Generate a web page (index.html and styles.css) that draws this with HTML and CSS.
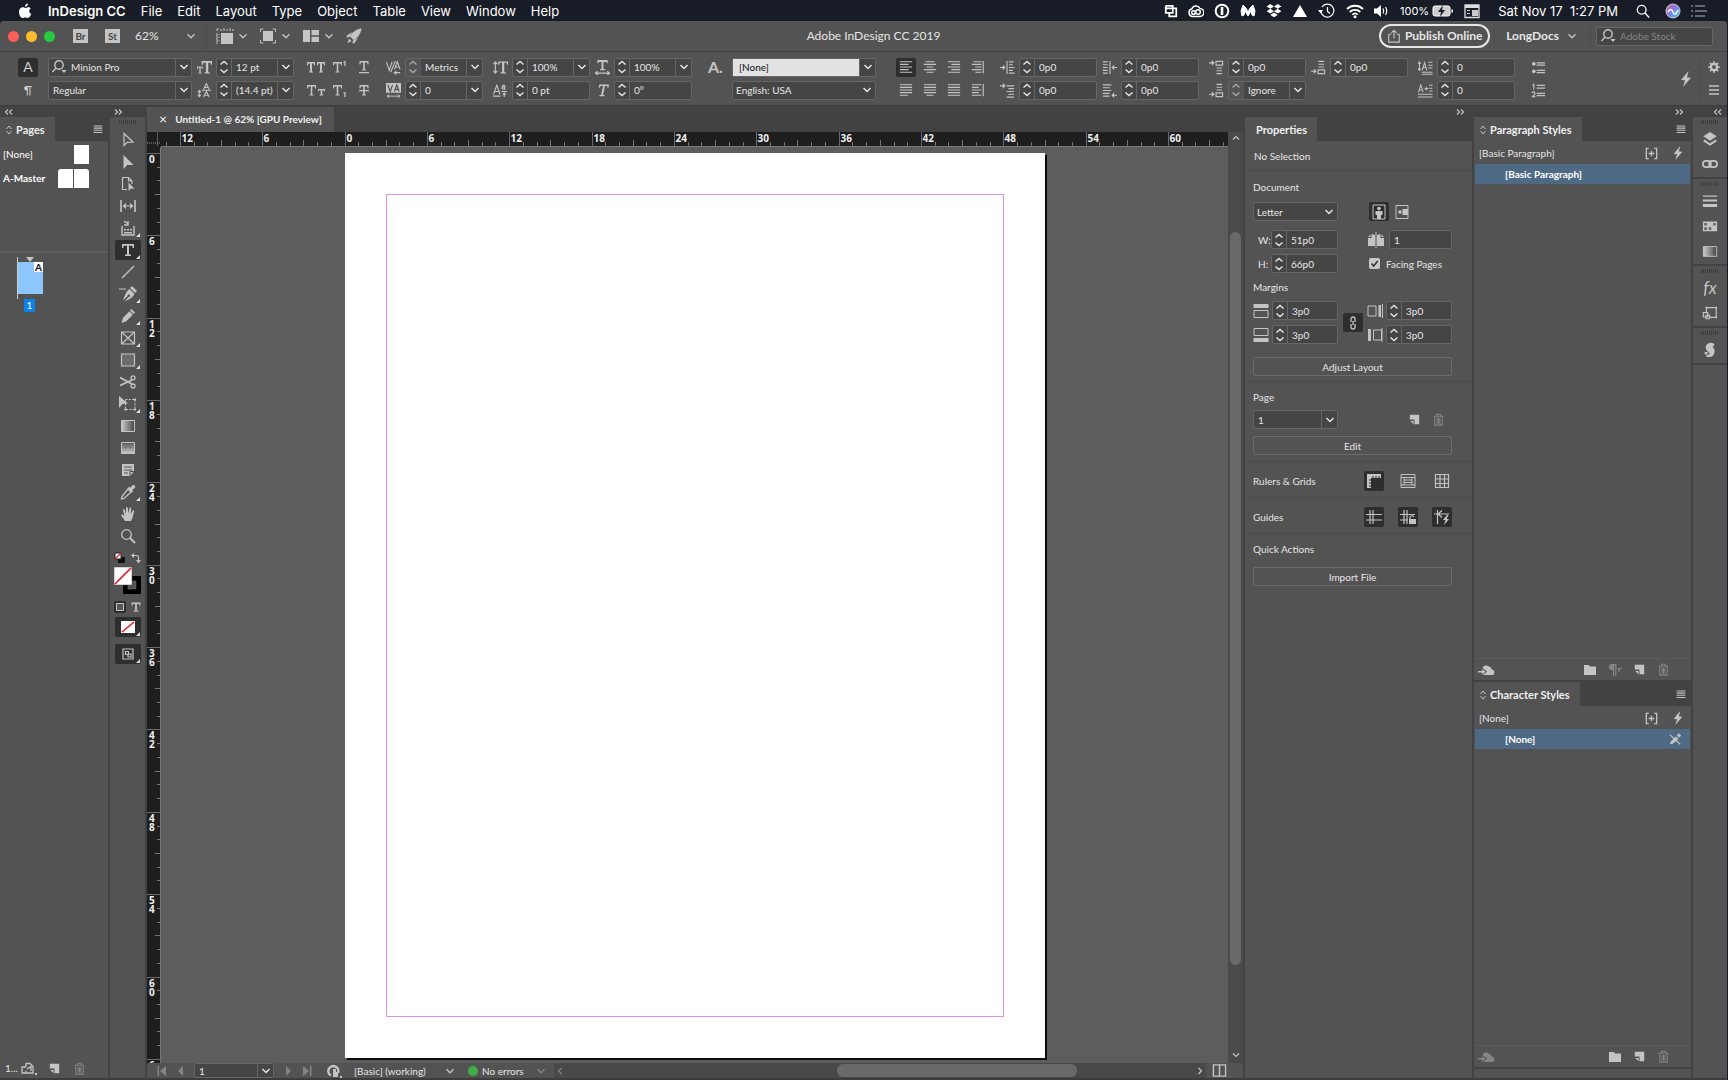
FILE: index.html
```html
<!DOCTYPE html>
<html lang="en">
<head>
<meta charset="utf-8">
<title>Adobe InDesign CC 2019</title>
<link rel="stylesheet" href="styles.css">
</head>
<body>
<svg class="defs" aria-hidden="true">
  <defs>
    <linearGradient id="fade"><stop offset="0" stop-color="#ccc"/><stop offset="1" stop-color="#444"/></linearGradient>
    <linearGradient id="fadeV" x2="0" y2="1"><stop offset="0" stop-color="#555"/><stop offset="1" stop-color="#ccc"/></linearGradient>
    <linearGradient id="siri" x2="1" y2="1"><stop offset="0" stop-color="#e8508c"/><stop offset=".5" stop-color="#7a7ff0"/><stop offset="1" stop-color="#3fd0e8"/></linearGradient>
  </defs>
  <symbol id="chev" viewBox="0 0 16 16"><path d="M4 6l4 4 4-4" fill="none" stroke="currentColor" stroke-width="1.6"/></symbol>
  <symbol id="loupe" viewBox="0 0 16 16"><g fill="none" stroke="currentColor" stroke-width="1.4"><circle cx="8" cy="6" r="4.2"/><path d="M5 9L1.500 13"/></g><path d="M10.500 11h5l-2.500 3z" fill="currentColor"/></symbol>
  <symbol id="burger" viewBox="0 0 16 16"><path d="M3 4.500h10M3 7h10M3 9.500h10M3 12h10" stroke="currentColor" stroke-width="1.200"/></symbol>
  <symbol id="burger3" viewBox="0 0 16 16"><path d="M3 4h10M3 8h10M3 12h10" stroke="currentColor" stroke-width="1.400"/></symbol>
  <symbol id="bolt" viewBox="0 0 16 16"><path d="M10.500 0L3 9l4 .3L5 16l8-9.300-4-.3z" fill="currentColor"/></symbol>
  <symbol id="newpage" viewBox="0 0 16 16"><path d="M3 3h10v10H8V8H3z M3.500 9.500H7V13z" fill="currentColor"/></symbol>
  <symbol id="trash" viewBox="0 0 16 16"><path d="M3 4.500h10M6 4V2.500h4V4M4 5v9h8V5M6.500 6.500v6M8 6.500v6M9.500 6.500v6" fill="none" stroke="currentColor" stroke-width="1.100"/></symbol>
  <symbol id="folder" viewBox="0 0 16 16"><path d="M2 3h5l1 1.500h6V13H2z" fill="currentColor"/></symbol>
  <symbol id="cloud" viewBox="0 0 16 16"><path d="M5 13h8.500a2.700 2.700 0 0 0 .2-5.400A3.500 3.500 0 0 0 11 4.500 4 4 0 0 0 4.500 6L9 9.500 5 13zM0 9h4V7l3.500 2.700L4 12.500v-2H0z" fill="currentColor"/></symbol>
  <symbol id="plusbox" viewBox="0 0 16 16"><path d="M5 2.500H2.500v11H5M11 2.500h2.500v11H11M5 8h6M8 5v6" fill="none" stroke="currentColor" stroke-width="1.400"/></symbol>
  <symbol id="diamond" viewBox="0 0 8 12"><path d="M1.500 5L4 2l2.500 3M1.500 7L4 10l2.500-3" fill="none" stroke="currentColor"/></symbol>
  <symbol id="ja" viewBox="0 0 16 16"><path d="M1 2h14M1 5h10M1 8h14M1 11h10M1 14h14" stroke="currentColor" stroke-width="1.300"/></symbol>
  <symbol id="jc" viewBox="0 0 16 16"><path d="M3 2h10M1 5h14M4 8h8M1 11h14M4 14h8" stroke="currentColor" stroke-width="1.300"/></symbol>
  <symbol id="jr" viewBox="0 0 16 16"><path d="M1 2h14M5 5h10M1 8h14M5 11h10M1 14h14" stroke="currentColor" stroke-width="1.300"/></symbol>
  <symbol id="js" viewBox="0 0 16 16"><path d="M3 2h9M1 5h11M5 8h7M1 11h11M5 14h7M14 1v14" stroke="currentColor" stroke-width="1.300"/></symbol>
  <symbol id="jl1" viewBox="0 0 16 16"><path d="M1 2h14M1 5h14M1 8h14M1 11h14M1 14h9" stroke="currentColor" stroke-width="1.300"/></symbol>
  <symbol id="jl2" viewBox="0 0 16 16"><path d="M1 2h14M1 5h14M1 8h14M1 11h14M4 14h8" stroke="currentColor" stroke-width="1.300"/></symbol>
  <symbol id="jl3" viewBox="0 0 16 16"><path d="M1 2h14M1 5h14M1 8h14M1 11h14M1 14h14" stroke="currentColor" stroke-width="1.300"/></symbol>
  <symbol id="jl4" viewBox="0 0 16 16"><path d="M1 2h11M1 5h8M1 8h11M1 11h8M1 14h11M14 1v14" stroke="currentColor" stroke-width="1.300"/></symbol>
  <symbol id="indL" viewBox="0 0 16 16"><path d="M0 8h4M7.500 1v14M9.500 2h5M9.500 5h4M9.500 8h6M9.500 11h4M9.500 14h6" stroke="currentColor" stroke-width="1.200"/><path d="M3 5l3 3-3 3z" fill="currentColor"/></symbol>
  <symbol id="indR" viewBox="0 0 16 16"><path d="M16 8h-4M8.500 1v14M1 2h5M1 5h5M1 8h5M1 11h5M1 14h5" stroke="currentColor" stroke-width="1.200"/><path d="M13 5l-3 3 3 3z" fill="currentColor"/></symbol>
  <symbol id="indF" viewBox="0 0 16 16"><path d="M0 3h4M7 3h8M9 6h6M7 9h8M9 12h6M7 15h8" stroke="currentColor" stroke-width="1.200"/><path d="M3 0l3 3-3 3z" fill="currentColor"/></symbol>
  <symbol id="indE" viewBox="0 0 16 16"><path d="M16 13h-4M1 2h9M1 5h7M1 8h9M1 11h7M1 14h7" stroke="currentColor" stroke-width="1.200"/><path d="M13 10l-3 3 3 3z" fill="currentColor"/></symbol>
  <symbol id="spB" viewBox="0 0 16 16"><path d="M0 3h4M7.500 1.500h7v4h-7zM8 8.500h6M8 11.500h6M8 14.500h6" stroke="currentColor" stroke-width="1.200" fill="none"/><path d="M3 0l3 3-3 3z" fill="currentColor"/></symbol>
  <symbol id="spA" viewBox="0 0 16 16"><path d="M0 12h4M7.500 10.500h7v4h-7zM8 1.500h6M8 4.500h6M8 7.500h6" stroke="currentColor" stroke-width="1.200" fill="none"/><path d="M3 9l3 3-3 3z" fill="currentColor"/></symbol>
  <symbol id="drop1" viewBox="0 0 16 16"><path d="M1.500 2v9M0 4l1.500-2L3 4M0 9l1.500 2L3 9M4.500 11L7 3l2.500 8M5.500 8h3M11 2.500h4.500M11 5.500h4.500M11 8.500h4.500M4 13h11.500M4 15.300h11.500" stroke="currentColor" stroke-width="1.100" fill="none"/></symbol>
  <symbol id="drop2" viewBox="0 0 16 16"><path d="M.5 10L3 2l2.500 8M1.500 7.500h3M7 6h4M9 4v4M12 2.500h3.500M12 5.500h3.500M12 8.500h3.500M0 12h15.500M0 15h15.500" stroke="currentColor" stroke-width="1.100" fill="none"/></symbol>
  <symbol id="bul" viewBox="0 0 16 16"><circle cx="3" cy="4" r="2" fill="currentColor"/><circle cx="3" cy="12" r="2" fill="currentColor"/><path d="M6 3h9M6 5.500h9M6 11h9M6 13.500h9" stroke="currentColor" stroke-width="1.200"/></symbol>
  <symbol id="num" viewBox="0 0 16 16"><path d="M1.500 2.500L3 1.500V7M1 10.500q2-2 3 0T1 14.500h3.500M6 2.500h9M6 5.500h9M6 11h9M6 13.500h9" stroke="currentColor" stroke-width="1.200" fill="none"/></symbol>
  <symbol id="tsize" viewBox="0 0 16 16"><path d="M5 1h11v4h-1.200l-.3-2h-2.500v10H13.500v1.500H8V13h1.500V3H6.800l-.3 2H5z M0 7h6.500v2.500h-.8L5.500 8H4v5.500h1v1H1.500v-1h1V8H1L.8 9.500H0z" fill="currentColor"/></symbol>
  <symbol id="lead" viewBox="0 0 16 16"><path d="M2.500 8v6M.8 10L2.500 8l1.700 2M.8 12.500l1.700 2 1.700-2M7 7l3-6.500L13 7M8 4.800h4M7 15l3-6 3 6M8 13h4M5 7.700h10" stroke="currentColor" stroke-width="1.100" fill="none"/></symbol>
  <symbol id="kern" viewBox="0 0 16 16"><path d="M.5 2L3.500 11l3-9M5 13L10 1M9 10l3-8 3 8M10 7.500h4M15 13.500H9" stroke="currentColor" stroke-width="1.200" fill="none"/><path d="M11 11l-3 2.500 3 2.500z" fill="currentColor"/></symbol>
  <symbol id="track" viewBox="0 0 16 16"><path d="M0 0h16v10.500H0z" fill="currentColor"/><path d="M2 2l2.500 7L7 2M9 9l2.500-7L14 9M10 6.700h3" stroke="#535353" stroke-width="1.300" fill="none"/><path d="M2 14h12M3.500 12L1 14l2.500 2M12.500 12l2.500 2-2.500 2" stroke="currentColor" fill="none"/></symbol>
  <symbol id="vs" viewBox="0 0 16 16"><path d="M2.500 2v12M.5 4.500l2-2.500 2 2.500M.5 11.500l2 2.500 2-2.500" stroke="currentColor" stroke-width="1.200" fill="none"/><path d="M5.500 1.500H16V5h-1l-.5-2h-2.500v10h1.700v1.500H8V13h1.700V3H7l-.5 2h-1z" fill="currentColor"/></symbol>
  <symbol id="hs" viewBox="0 0 16 16"><path d="M2.500 0h11v3.500h-1L12 2H9v7.500h1.700V11H5.300V9.500H7V2H4l-.5 1.500h-1z" fill="currentColor"/><path d="M1 14h14M3 12l-2.500 2L3 16M13 12l2.500 2-2.500 2" stroke="currentColor" stroke-width="1.200" fill="none"/></symbol>
  <symbol id="base" viewBox="0 0 16 16"><path d="M.5 12L4 2.500 7.500 12M2 9h4M0 14h8M9.500 3q3-1.500 3 .5v3q-3.500 0-3-1.500T12.500 4.500M9 9h6M12 15v-4M10.500 12.500L12 10.500l1.500 2" stroke="currentColor" stroke-width="1.200" fill="none"/></symbol>
  <symbol id="skew" viewBox="0 0 16 16"><path d="M4.500 1.500H15l-.7 3.500h-1l-.2-1.700h-2.500L8.500 12.700h1.800l-.3 1.500H4.500l.3-1.500h1.700L8.600 3.300H6L5 5H4z" fill="currentColor"/></symbol>
  <symbol id="t1" viewBox="0 0 20 16"><path d="M1 3h8v3.500H8l-.3-2H6v8h1v1H3v-1h1v-8H2.300l-.3 2H1zM11 3h8v3.500h-1l-.3-2H16v8h1v1h-4v-1h1v-8h-1.700l-.3 2h-1z" fill="currentColor"/></symbol>
  <symbol id="t2" viewBox="0 0 20 16"><path d="M1 3h9v3.500H9l-.3-2H6.300v8h1.200v1H3.500v-1h1.200v-8H2.300l-.3 2H1zM12 7h7v2.500h-.8l-.2-1.300h-1.700v4.300h.9v1h-3.500v-1h.9V8.200H13l-.2 1.300H12z" fill="currentColor"/></symbol>
  <symbol id="t3" viewBox="0 0 20 16"><path d="M3 3h9v3.500h-1l-.3-2H8.300v8h1.200v1H5.500v-1h1.200v-8H4.300l-.3 2H3zM13 3l2-1h.6v5h-1.300V3.600H13z" fill="currentColor"/></symbol>
  <symbol id="t4" viewBox="0 0 20 16"><path d="M3 3h9v3.500h-1l-.3-2H8.300v8h1.200v1H5.500v-1h1.200v-8H4.300l-.3 2H3zM13 11l2-1h.6v5h-1.300v-3.400H13z" fill="currentColor"/></symbol>
  <symbol id="t5" viewBox="0 0 20 16"><path d="M5.500 2h9v3.500h-1l-.3-2h-2.400v7H12v1H8v-1h1.200v-7H6.800l-.3 2h-1zM5 13h10v1.300H5z" fill="currentColor"/></symbol>
  <symbol id="t6" viewBox="0 0 20 16"><path d="M5.500 3h9v3.500h-1l-.3-2h-2.400v8H12v1H8v-1h1.200v-8H6.800l-.3 2h-1zM5 8h10v1.200H5z" fill="currentColor"/></symbol>
  <symbol id="grid" viewBox="0 0 16 16"><path d="M1.500 1.500h13v13h-13zM6 1v14M10.500 1v14M1 6h14M1 10.500h14" fill="none" stroke="currentColor" stroke-width="1.200"/></symbol>
  <symbol id="fold" viewBox="0 0 10 8"><path d="M1 1.500L3.500 4 1 6.500M5 1.500L7.500 4 5 6.500" fill="none" stroke="currentColor" stroke-width="1.200"/></symbol>
  <symbol id="unfold" viewBox="0 0 10 8"><path d="M4 1.500L1.500 4 4 6.500M8 1.500L5.500 4 8 6.500" fill="none" stroke="currentColor" stroke-width="1.200"/></symbol>
</svg>

<nav class="menubar" aria-label="System menu">
  <svg class="i16" viewBox="0 0 16 16"><path fill="#fff" d="M11 .5c.1 1.700-1.400 3.300-3 3.200C7.800 2.100 9.400.6 11 .5zM13.700 5.400c-2.300 1.500-1.800 4.500.6 5.400-.6 1.900-2 4.200-3.300 4.200-1 0-1.500-.6-2.700-.6s-1.700.6-2.600.6C3.900 15 2 11.800 2 8.900c0-3 1.900-4.600 3.700-4.600 1.100 0 1.900.7 2.700.7.700 0 1.700-.8 3-.8 1 0 1.800.5 2.300 1.200z"/></svg>
  <a class="app" href="#">InDesign CC</a><a href="#">File</a><a href="#">Edit</a><a href="#">Layout</a><a href="#">Type</a><a href="#">Object</a><a href="#">Table</a><a href="#">View</a><a href="#">Window</a><a href="#">Help</a>
  <div class="tray">
    <svg class="i14" viewBox="0 0 16 16"><path d="M2 2h8v3M5 5h-3V2M5 5h9v9H6v-4M10 5v5H2V5" fill="none" stroke="#fff" stroke-width="2"/></svg>
    <svg class="i16" viewBox="0 0 16 16"><g fill="none" stroke="#fff" stroke-width="1.500"><path d="M4.500 13.500a4 4 0 0 1-.6-7.800A4.500 4.500 0 0 1 12 5.500a4 4 0 0 1-.5 8z"/><circle cx="5.500" cy="9.500" r="1.800"/><circle cx="10" cy="9" r="2.300"/></g></svg>
    <svg class="i16" viewBox="0 0 16 16"><circle cx="8" cy="8" r="6.300" fill="none" stroke="#fff" stroke-width="2"/><path d="M6.700 4h2.600v8H6.700z" fill="#fff"/></svg>
    <svg class="i16" viewBox="0 0 16 16"><path d="M3 2l3 3 2 4 2-4 3-3 2 6-1 5-2-1-1-4-3 5-3-5-1 4-2 1-1-5z" fill="#fff" stroke="#fff"/></svg>
    <svg class="i16" viewBox="0 0 16 16"><path d="M4.300 1L8 3.400 4.300 5.800.6 3.400zM11.700 1l3.700 2.400-3.700 2.400L8 3.400zM4.300 5.800L8 8.200l-3.700 2.400L.6 8.200zM11.700 5.800l3.700 2.400-3.700 2.400L8 8.200zM8 9.500l3.700 2.400L8 14.300l-3.700-2.400z" fill="#fff"/></svg>
    <svg class="i16" viewBox="0 0 16 16"><path d="M8 2l7 12H1z" fill="#fff"/></svg>
    <svg class="i18" viewBox="0 0 18 16"><g fill="none" stroke="#fff" stroke-width="1.200"><path d="M4 4a6.500 6.500 0 1 1-1 5M9.500 4v4.500l2.500 2"/></g><path d="M0 7h5L2.500 10.500z" fill="#fff"/></svg>
    <svg class="i18" viewBox="0 0 18 16"><g fill="none" stroke="#fff" stroke-width="1.800"><path d="M1 6a11.500 11.500 0 0 1 16 0M3.700 9a7.500 7.500 0 0 1 10.600 0M6.300 11.600a4 4 0 0 1 5.400 0"/></g><circle cx="9" cy="13.700" r="1.500" fill="#fff"/></svg>
    <svg class="i16" viewBox="0 0 16 16"><path d="M0 5.500h3L7 2v12l-4-3.500H0z" fill="#fff"/><path d="M9 5.500q1.500 2.500 0 5M11.500 4q2.500 4 0 8" fill="none" stroke="#fff" stroke-width="1.200"/></svg>
    <span class="power"><span class="pct">100%</span>
    <svg class="bat" viewBox="0 0 22 14"><rect x="1" y="2" width="17" height="10" rx="2" fill="#ccc" stroke="#fff"/><path d="M19.500 5v4l1.500-1V6z" fill="#fff"/><path d="M11 1L6 8h3l-1 5 5-7h-3z" fill="#181c26"/></svg></span>
    <svg class="i16" viewBox="0 0 16 16"><path d="M1 2h14v12.500H1z" fill="none" stroke="#ddd" stroke-width="1.300"/><path d="M1 2h14v3H1z" fill="#ddd"/><path d="M8 7h6v6H8zM3 7h3v1H3zM3 10h3v1H3z" fill="#ccc"/></svg>
    <span class="clock">Sat Nov 17&nbsp; 1:27 PM</span>
    <svg class="i14" viewBox="0 0 16 16"><circle cx="6.500" cy="6.500" r="5" fill="none" stroke="#fff" stroke-width="1.500"/><path d="M10 10l5 5.500" stroke="#fff" stroke-width="1.500"/></svg>
    <svg class="i16 siri" viewBox="0 0 16 16"><circle cx="8" cy="8" r="7" fill="url(#siri)" stroke="#ccc"/><path d="M3 9q3-5 5 0t5-2" fill="none" stroke="#fff" stroke-width="1.500"/></svg>
    <svg class="i16" viewBox="0 0 16 16"><path d="M0 3h2M0 8h2M0 13h2M4 3h10M4 8h12M4 13h10" stroke="#7b8290" stroke-width="1.700"/></svg>
  </div>
</nav>

<div class="window">
<header class="appbar">
  <div class="left">
    <span class="lights"><i class="red"></i><i class="amber"></i><i class="green"></i></span>
    <button class="badge">Br</button><button class="badge">St</button>
    <span class="zoomlevel"><span>62%</span><svg class="i14"><use href="#chev"/></svg></span>
    <button class="view"><svg class="i18" viewBox="0 0 18 16"><path d="M5 5h12v11H5z" fill="currentColor"/><path d="M1 5v11M3 6v1M3 9v1M3 12v1M5 1v2M8 0v3M11 1v2M14 0v3M17 1v2M1 1h2M1 1v2" stroke="currentColor"/></svg><svg class="i14"><use href="#chev"/></svg></button>
    <button class="view"><svg class="i18" viewBox="0 0 18 16"><path d="M4 3h10v10H4z" fill="currentColor"/><path d="M1.500 4V1h3M13.500 1h3v3M16.500 12v3h-3M4.500 15h-3v-3" stroke="currentColor" fill="none"/></svg><svg class="i14"><use href="#chev"/></svg></button>
    <button class="view"><svg class="i18" viewBox="0 0 18 16"><path d="M1 2h7v12H1zM9.500 2H17v5.300H9.500zM9.500 8.700H17V14H9.500z" fill="currentColor"/></svg><svg class="i14"><use href="#chev"/></svg></button>
    <button class="plain"><svg class="i16" viewBox="0 0 16 16"><path d="M15.500.5C10 1 5.500 5 4 8.500l3.500 3.500C11.500 10 15 6 15.500.5zM6 4L1 7.500l-.5 2 3-.5zM12 10l-3.500 5-2 .5.500-3zM3 10.500l2.500 2.500L1.500 15z" fill="currentColor"/></svg></button>
  </div>
  <h1>Adobe InDesign CC 2019</h1>
  <div class="right">
    <button class="publish"><svg class="i14" viewBox="0 0 16 16"><path d="M5 6H2v9h12V6h-3M8 11V1.500M5 4.500l3-3 3 3" fill="none" stroke="currentColor" stroke-width="1.300"/></svg>Publish Online</button>
    <button class="workspace">LongDocs<svg class="i14"><use href="#chev"/></svg></button>
    <label class="stock"><svg class="i16"><use href="#loupe"/></svg><input type="search" placeholder="Adobe Stock" aria-label="Adobe Stock"></label>
  </div>
</header>

<section class="control" aria-label="Control">
  <div class="pair modes"><button class="tgl on big">A</button><button class="tgl">¶</button></div>
  <div class="pair fonts m">
    <div class="field"><svg class="i16 lead"><use href="#loupe"/></svg><input value="Minion Pro" aria-label="Font"><button class="drop" aria-label="Fonts"></button></div>
    <div class="field"><input value="Regular" aria-label="Style"><button class="drop" aria-label="Styles"></button></div>
  </div>
  <div class="pair num s">
    <label><svg class="i15"><use href="#tsize"/></svg><span class="field"><span class="spin"></span><input value="12 pt" aria-label="Font size"><button class="drop" aria-label="Sizes"></button></span></label>
    <label><svg class="i15"><use href="#lead"/></svg><span class="field"><span class="spin"></span><input value="(14.4 pt)" aria-label="Leading"><button class="drop" aria-label="Leadings"></button></span></label>
  </div>
  <div class="keys k3 m">
    <button><svg class="i20"><use href="#t1"/></svg></button><button><svg class="i20"><use href="#t3"/></svg></button><button><svg class="i20"><use href="#t5"/></svg></button>
    <button><svg class="i20"><use href="#t2"/></svg></button><button><svg class="i20"><use href="#t4"/></svg></button><button><svg class="i20"><use href="#t6"/></svg></button>
  </div>
  <div class="pair num m">
    <label><svg class="i15"><use href="#kern"/></svg><span class="field"><span class="spin off"></span><input value="Metrics" aria-label="Kerning"><button class="drop" aria-label="Kernings"></button></span></label>
    <label><svg class="i15"><use href="#track"/></svg><span class="field"><span class="spin"></span><input value="0" aria-label="Tracking"><button class="drop" aria-label="Trackings"></button></span></label>
  </div>
  <div class="pair num m">
    <label><svg class="i15"><use href="#vs"/></svg><span class="field"><span class="spin"></span><input value="100%" aria-label="Vertical scale"><button class="drop" aria-label="Scales"></button></span></label>
    <label><svg class="i15"><use href="#base"/></svg><span class="field"><span class="spin"></span><input value="0 pt" aria-label="Baseline shift"></span></label>
  </div>
  <div class="pair num s">
    <label><svg class="i15"><use href="#hs"/></svg><span class="field"><span class="spin"></span><input value="100%" aria-label="Horizontal scale"><button class="drop" aria-label="Scales"></button></span></label>
    <label><svg class="i15"><use href="#skew"/></svg><span class="field"><span class="spin"></span><input value="0°" aria-label="Skew"></span></label>
  </div>
  <div class="charstyle l">
    <span class="adot">A.</span>
    <div class="field lit"><input value="[None]" aria-label="Character style"><button class="drop" aria-label="Character styles"></button></div>
    <select class="sel" aria-label="Language"><option>English: USA</option></select>
  </div>
  <div class="keys k4 l">
    <button class="on"><svg class="i14"><use href="#ja"/></svg></button><button><svg class="i14"><use href="#jc"/></svg></button><button><svg class="i14"><use href="#jr"/></svg></button><button><svg class="i14"><use href="#js"/></svg></button>
    <button><svg class="i14"><use href="#jl1"/></svg></button><button><svg class="i14"><use href="#jl2"/></svg></button><button><svg class="i14"><use href="#jl3"/></svg></button><button><svg class="i14"><use href="#jl4"/></svg></button>
  </div>
  <div class="pair num m">
    <label><svg class="i15"><use href="#indL"/></svg><span class="field"><span class="spin"></span><input value="0p0" aria-label="Left indent"></span></label>
    <label><svg class="i15"><use href="#indF"/></svg><span class="field"><span class="spin"></span><input value="0p0" aria-label="First line indent"></span></label>
  </div>
  <div class="pair num s">
    <label><svg class="i15"><use href="#indR"/></svg><span class="field"><span class="spin"></span><input value="0p0" aria-label="Right indent"></span></label>
    <label><svg class="i15"><use href="#indE"/></svg><span class="field"><span class="spin"></span><input value="0p0" aria-label="Last line indent"></span></label>
  </div>
  <div class="pair num m">
    <label><svg class="i15"><use href="#spB"/></svg><span class="field"><span class="spin"></span><input value="0p0" aria-label="Space before"></span></label>
    <label><svg class="i15"><use href="#spA"/></svg><span class="field"><span class="spin off"></span><input value="Ignore" aria-label="Space between"><button class="drop" aria-label="Spaces"></button></span></label>
  </div>
  <div class="pair num s">
    <label><svg class="i15"><use href="#spA"/></svg><span class="field"><span class="spin"></span><input value="0p0" aria-label="Space after"></span></label>
  </div>
  <div class="pair num m">
    <label><svg class="i15"><use href="#drop1"/></svg><span class="field"><span class="spin"></span><input value="0" aria-label="Drop cap lines"></span></label>
    <label><svg class="i15"><use href="#drop2"/></svg><span class="field"><span class="spin"></span><input value="0" aria-label="Drop cap characters"></span></label>
  </div>
  <div class="pair lists l"><button class="plain"><svg class="i15"><use href="#bul"/></svg></button><button class="plain"><svg class="i15"><use href="#num"/></svg></button></div>
  <button class="plain flash"><svg class="i16"><use href="#bolt"/></svg></button>
  <div class="pair gear">
    <button class="plain"><svg class="i14" viewBox="0 0 16 16"><circle cx="8" cy="8" r="3.500" fill="none" stroke="currentColor" stroke-width="2.500"/><path d="M8 1.500v3M8 11.500v3M1.500 8h3M11.500 8h3M3.400 3.400l2 2M10.600 10.600l2 2M12.600 3.400l-2 2M5.400 10.600l-2 2" stroke="currentColor" stroke-width="2"/></svg></button>
    <button class="plain"><svg class="i16"><use href="#burger3"/></svg></button>
  </div>
</section>

<main class="work">
  <section class="pages">
    <div class="strip"><svg class="fold start"><use href="#unfold"/></svg></div>
    <div class="tabs"><h2 class="tab"><svg class="dia"><use href="#diamond"/></svg>Pages</h2><svg class="i14 mn"><use href="#burger"/></svg></div>
    <div class="masters">
      <div class="master"><span>[None]</span><i class="leaf"></i></div>
      <div class="master"><b>A-Master</b><span class="spread"><i class="leaf cl"></i><i class="leaf cr"></i></span></div>
    </div>
    <div class="thumbs">
      <div class="sheet"><span class="tri"></span><span class="blue"><b>A</b></span></div>
      <span class="pnum">1</span>
    </div>
    <footer class="pfoot"><span>1...</span>
      <svg class="i16" viewBox="0 0 16 16"><path d="M5 7V3.500h4l3 3V13H5v-2M5 7H1v6h4M6 9l4-2.500V11" fill="none" stroke="currentColor" stroke-width="1.300"/><path d="M14 13h2v2h-2z" fill="currentColor"/></svg>
      <svg class="i15"><use href="#newpage"/></svg><svg class="i15 dim"><use href="#trash"/></svg></footer>
  </section>

  <section class="tools" aria-label="Tools">
    <div class="strip"><svg class="fold"><use href="#fold"/></svg></div>
    <i class="grip"></i>
    <div class="toolset">
      <button><svg class="i16" viewBox="0 0 16 16"><path d="M4 1.500v12l3.200-3.200L13 10z" fill="none" stroke="currentColor" stroke-width="1.200"/></svg></button>
      <button><svg class="i16" viewBox="0 0 16 16"><path d="M3.500 1v14l3.700-4L13.500 11z" fill="currentColor"/></svg></button>
      <button><svg class="i16" viewBox="0 0 16 16"><path d="M7 13.500H2.500v-12h6L12 5v3M8.500 1.500V5H12" fill="none" stroke="currentColor" stroke-width="1.200"/><path d="M8.500 6.500v8.500l2-2.300 4-.2z" fill="currentColor"/></svg></button>
      <button><svg class="i16" viewBox="0 0 16 16"><path d="M1 2v12M15 2v12" stroke="currentColor" stroke-width="1.600"/><path d="M4 8h8" stroke="currentColor"/><path d="M6 5v6L2.500 8zM10 5v6l3.500-3z" fill="currentColor"/></svg></button>
      <button class="more"><svg class="i16" viewBox="0 0 16 16"><path d="M2 6v9h12V6M4 1l4 3M8 1v4H4" fill="none" stroke="currentColor" stroke-width="1.400"/><path d="M4 9h2v1.500H4zM7 9h2v1.500H7zM10 9h2v1.500h-2zM4 12h8v1.500H4z" fill="currentColor"/></svg></button>
      <button class="more on"><svg class="i16" viewBox="0 0 16 16"><path d="M2 2h12v4h-1.200l-.6-2.300H9v8.800h2V14H5v-1.500h2V3.700H3.800L3.200 6H2z" fill="currentColor"/></svg></button>
      <button><svg class="i16" viewBox="0 0 16 16"><path d="M2 14L14 2" stroke="currentColor" stroke-width="1.500"/></svg></button>
      <button class="more"><svg class="i18" viewBox="0 0 18 16"><path d="M0 3h7M13 .5l4.500 4.500L16 6.500 11.500 2z" stroke="currentColor" fill="currentColor"/><path d="M10.500 3l5 5c-1.500 3-4 5-10 7.500l4-4.500a1.300 1.300 0 1 0-1-1L4 14.500C6 8.500 7.500 5 10.500 3z" fill="currentColor"/></svg></button>
      <button class="more"><svg class="i16" viewBox="0 0 16 16"><path d="M11.500 1l3.500 3.500L13.500 6 10 2.500zM9.300 3.300l3.500 3.500L6 13.500 1.500 15 3 10z" fill="currentColor"/></svg></button>
      <button class="more"><svg class="i16" viewBox="0 0 16 16"><path d="M1.500 2h13v12h-13zM1.500 2l13 12M14.500 2l-13 12" fill="none" stroke="currentColor" stroke-width="1.200"/></svg></button>
      <button class="more"><svg class="i16" viewBox="0 0 16 16"><path d="M1.500 2h13v12h-13z" fill="#6a6a6a" stroke="currentColor" stroke-width="1.200"/></svg></button>
      <button><svg class="i16" viewBox="0 0 16 16"><path d="M0 3.500l12 6.500M0 11.500L12 6" stroke="currentColor" stroke-width="1.800"/><g fill="none" stroke="currentColor" stroke-width="1.300"><circle cx="13" cy="3.800" r="2"/><circle cx="13" cy="12" r="2"/></g></svg></button>
      <button class="more"><svg class="i18" viewBox="0 0 18 16"><path d="M0 0v12l3.500-4L9 7.500z" fill="currentColor"/><path d="M6.500 3.500h9.500v10H6.500z" fill="none" stroke="currentColor" stroke-dasharray="2 1.300"/><path d="M15 2.500h2v2h-2zM15 12.500h2v2h-2zM5.500 12.500h2v2h-2z" fill="currentColor"/></svg></button>
      <button><svg class="i16" viewBox="0 0 16 16"><path d="M1.500 2.500h13v11h-13z" fill="url(#fade)" stroke="currentColor"/></svg></button>
      <button><svg class="i16" viewBox="0 0 16 16"><path d="M1.500 2.500h13v11h-13z" fill="url(#fadeV)" stroke="currentColor"/><path d="M3 4h2v2H3zM7 4h2v2H7zM11 4h2v2h-2zM5 6h2v2H5zM9 6h2v2H9z" fill="#777"/></svg></button>
      <button><svg class="i16" viewBox="0 0 16 16"><path d="M2 2h12v7.500L10 14H2z" fill="currentColor"/><path d="M4 5h8M4 8h8M4 11h4M14 9.500h-4V14" stroke="#535353" stroke-width="1.100" fill="none"/></svg></button>
      <button class="more"><svg class="i16" viewBox="0 0 16 16"><path d="M8 5l3 3-7 6.500-2.500.5L2 12.500z" fill="none" stroke="currentColor" stroke-width="1.300"/><path d="M7.500 4L9 2.700l1.200 1.200 1.900-2.300c1.800-1.700 4.200.7 2.500 2.500l-2.400 1.900L13.300 7 12 8.500z" fill="currentColor"/></svg></button>
      <button><svg class="i16" viewBox="0 0 16 16"><path d="M5 15c-1-2-3-4-4-6 1-1 2-.5 3.500 1.300L3 4c0-1.300 1.400-1.300 1.700 0l1.200 4L6 2c0-1.400 1.700-1.400 1.800 0l.5 5.600L9.500 2.300c.3-1.300 1.800-1 1.700.3l-.4 5.600 1.800-3.500c.7-1.200 1.900-.5 1.500.7C13 9 13 12 11 15z" fill="currentColor"/></svg></button>
      <button><svg class="i16" viewBox="0 0 16 16"><circle cx="6.500" cy="6.500" r="4.800" fill="none" stroke="currentColor" stroke-width="1.300"/><path d="M10 10l5 5" stroke="currentColor" stroke-width="2"/></svg></button>
    </div>
    <div class="swap">
      <svg class="i12" viewBox="0 0 12 12"><path d="M4 5h7v6H4z" fill="#111"/><path d="M1 1h6v6H1z" fill="#fff" stroke="#222"/><path d="M1 7l6-6" stroke="#d22" stroke-width="1.300"/></svg>
      <svg class="i12" viewBox="0 0 12 12"><path d="M3 3.500h3.500q2 0 2 2V9" fill="none" stroke="currentColor" stroke-width="1.200"/><path d="M4 1v5L1 3.500zM6 8h5l-2.500 3.500z" fill="currentColor"/></svg>
    </div>
    <svg class="fillstroke" viewBox="0 0 28 28"><path d="M9 9h18v18H9z" fill="#000"/><path d="M14 14h8v8h-8z" fill="#535353" stroke="#777" stroke-width=".5"/><path d="M0 0h18v18H0z" fill="#fff" stroke="#444" stroke-width=".5"/><path d="M1 17L17 1" stroke="#e11b22" stroke-width="1.700"/></svg>
    <div class="swap fmt"><button class="on"><svg class="i12" viewBox="0 0 12 12"><path d="M2.500 2.500h7v7h-7z" fill="#555" stroke="currentColor"/></svg></button><button><svg class="i12" viewBox="0 0 16 16"><path d="M2 2h12v4h-1.200l-.6-2H9.200v8.500h2V14H4.800v-1.500h2V4H3.800l-.6 2H2z" fill="currentColor"/></svg></button></div>
    <div class="toolset low">
      <button class="more on"><svg class="i14" viewBox="0 0 14 14"><path d="M0 1h14v12H0z" fill="#fff"/><path d="M1 12L13 2" stroke="#e11b22" stroke-width="1.600"/></svg></button>
      <button class="more on"><svg class="i14" viewBox="0 0 14 14"><path d="M2 2h10v10H2zM4.500 4.500h3v3h-3zM7 7h3v3H7z" fill="none" stroke="currentColor" stroke-width="1.200"/></svg></button>
    </div>
  </section>

  <section class="doc">
    <div class="doctabs"><div class="doctab"><button class="plain x" aria-label="Close">×</button><b>Untitled-1 @ 62% [GPU Preview]</b></div></div>
    <svg class="origin" viewBox="0 0 14 14"><path d="M0 10.500h14M10.500 0v14" stroke="#999" stroke-dasharray="1 1"/></svg>
    <svg class="hruler" id="hruler"></svg>
    <svg class="vruler" id="vruler"></svg>
    <div class="canvas"><div class="page"><div class="margins"></div></div></div>
    <div class="vbar"><svg class="i12 up"><use href="#chev"/></svg><i></i><svg class="i12"><use href="#chev"/></svg></div>
    <footer class="status">
      <span class="nav"><svg class="i12" viewBox="0 0 12 12"><path d="M1.500 1h1.500v10H1.500zM10 1v10L4 6z" fill="currentColor"/></svg><svg class="i12" viewBox="0 0 12 12"><path d="M9 1v10L4 6z" fill="currentColor"/></svg></span>
      <div class="field"><input value="1" aria-label="Page"><button class="drop" aria-label="Pages"></button></div>
      <span class="nav"><svg class="i12" viewBox="0 0 12 12"><path d="M3 1v10l5-5z" fill="currentColor"/></svg><svg class="i12" viewBox="0 0 12 12"><path d="M9 1h1.500v10H9zM2 1v10l6-5z" fill="currentColor"/></svg></span>
      <svg class="i16 open" viewBox="0 0 16 16"><path d="M5 12.500A5 5 0 1 1 12 10" fill="none" stroke="currentColor" stroke-width="2.500"/><path d="M7 6h3v3h2v5H7zM14 13h2v2h-2z" fill="currentColor"/></svg>
      <button class="pick basic">[Basic] (working)<svg class="i14"><use href="#chev"/></svg></button>
      <button class="pick errs"><i></i>No errors<svg class="i14 dim"><use href="#chev"/></svg></button>
      <div class="hbar"><svg class="i12 lt dim"><use href="#chev"/></svg><i></i><svg class="i12 rt"><use href="#chev"/></svg></div>
      <svg class="i15 split" viewBox="0 0 16 16"><path d="M1.500 2h13v12h-13zM8 2v12" fill="none" stroke="currentColor" stroke-width="1.500"/></svg>
    </footer>
  </section>

  <section class="props">
    <div class="strip"><svg class="fold"><use href="#fold"/></svg></div>
    <div class="tabs"><h2 class="tab wide">Properties</h2></div>
    <p class="line">No Selection</p>
    <div class="block docblock">
      <h3>Document</h3>
      <div class="two size">
        <select class="sel" aria-label="Page size"><option>Letter</option></select>
        <div class="orient"><button class="on"><svg class="i16" viewBox="0 0 16 16"><path d="M2 1h12v14H2z" fill="none" stroke="currentColor"/><circle cx="8" cy="4.500" r="1.800" fill="currentColor"/><path d="M4.500 7h7v4H10v4H6v-4H4.500z" fill="currentColor"/></svg></button><button><svg class="i16" viewBox="0 0 16 16"><path d="M2 1.500h12v13H2z" fill="none" stroke="currentColor"/><circle cx="6" cy="8" r="1.800" fill="currentColor"/><path d="M8.500 5H14v6H8.500z" fill="currentColor"/></svg></button></div>
      </div>
      <div class="two">
        <label class="dim1"><span>W:</span><span class="field"><span class="spin"></span><input value="51p0"></span></label>
        <label class="cnt"><svg class="i18" viewBox="0 0 18 16"><path d="M4.500 2L8 3v11H1V6h3.500zM1 5l2.500-2.500V5zM10 3l3.500-1v4H17v8h-7zM14.500 2.500L17 5h-2.500z" fill="currentColor"/><path d="M9 0v16" stroke="currentColor"/></svg><span class="field"><input value="1" aria-label="Pages"></span></label>
      </div>
      <div class="two">
        <label class="dim1"><span>H:</span><span class="field"><span class="spin"></span><input value="66p0"></span></label>
        <label class="check"><input type="checkbox" checked>Facing Pages</label>
      </div>
      <h3>Margins</h3>
      <div class="marg">
        <div class="pair">
          <label><svg class="i16" viewBox="0 0 16 16"><path d="M.5 1h15v4H.5z" fill="currentColor"/><path d="M1 7.500h14v7H1z" fill="none" stroke="currentColor"/></svg><span class="field"><span class="spin"></span><input value="3p0" aria-label="Top"></span></label>
          <label><svg class="i16" viewBox="0 0 16 16"><path d="M.5 11h15v4H.5z" fill="currentColor"/><path d="M1 1.500h14v7H1z" fill="none" stroke="currentColor"/></svg><span class="field"><span class="spin"></span><input value="3p0" aria-label="Bottom"></span></label>
        </div>
        <button class="link on" aria-label="Link"><svg class="i14" viewBox="0 0 14 14"><path d="M7 5V9M5 6V3a2 2 0 0 1 4 0v3M5 8v3a2 2 0 0 0 4 0V8" fill="none" stroke="currentColor" stroke-width="1.300"/></svg></button>
        <div class="pair">
          <label><svg class="i16" viewBox="0 0 16 16"><path d="M1 3h8v10H1z" fill="none" stroke="currentColor"/><path d="M11.500 2H14v12h-2.500zM15 1h1v14h-1z" fill="currentColor"/></svg><span class="field"><span class="spin"></span><input value="3p0" aria-label="Inside"></span></label>
          <label><svg class="i16" viewBox="0 0 16 16"><path d="M6.500 3h8v10h-8z" fill="none" stroke="currentColor"/><path d="M1 2h3v12H1zM14.500 1h1v14h-1z" fill="currentColor"/></svg><span class="field"><span class="spin"></span><input value="3p0" aria-label="Outside"></span></label>
        </div>
      </div>
      <button class="wide-btn">Adjust Layout</button>
    </div>
    <div class="block pageblock">
      <h3>Page</h3>
      <div class="two">
        <div class="field"><input value="1" aria-label="Current page"><button class="drop" aria-label="Pages"></button></div>
        <div class="acts"><svg class="i15"><use href="#newpage"/></svg><svg class="i15 dim"><use href="#trash"/></svg></div>
      </div>
      <button class="wide-btn">Edit</button>
    </div>
    <div class="block rowblock"><h3>Rulers &amp; Grids</h3>
      <div class="trio"><button class="on"><svg class="i16" viewBox="0 0 16 16"><path d="M1 1h14v4H5v10H1z" fill="currentColor"/><path d="M7 3v2M10 3v2M13 3v2M3 7h2M3 10h2M3 13h2" stroke="#2e2e2e"/></svg></button><button><svg class="i16" viewBox="0 0 16 16"><path d="M1 1.500h14v13H1zM4 4v8M12 4v8M1 4.500h14M4 7h8M4 9.500h8M1 12h14" fill="none" stroke="currentColor"/></svg></button><button><svg class="i16"><use href="#grid"/></svg></button></div></div>
    <div class="block rowblock"><h3>Guides</h3>
      <div class="trio"><button class="on"><svg class="i16" viewBox="0 0 16 16"><path d="M4 1v14M7 1v14M0 5.500h16M0 11h16" stroke="currentColor" stroke-width="1.200"/></svg></button><button class="on"><svg class="i16" viewBox="0 0 16 16"><path d="M4 1v14M7 1v14M0 5.500h15M0 11h8" stroke="currentColor" stroke-width="1.200"/><path d="M9 10h7v5H9z" fill="currentColor"/><path d="M10 10V8q2-2.500 4 0" fill="none" stroke="currentColor" stroke-width="1.200"/></svg></button><button class="on"><svg class="i16" viewBox="0 0 16 16"><path d="M3.500 1v14M0 5h15M4 5l4-3.500M4 5l4 3.500" stroke="currentColor" stroke-width="1.200"/><path d="M13 6l-4 5h2.500l-1.500 5 5-6h-2.500l2-4z" fill="currentColor"/></svg></button></div></div>
    <div class="block quick"><h3>Quick Actions</h3><button class="wide-btn">Import File</button></div>
  </section>

  <section class="styles">
    <div class="strip"><svg class="fold"><use href="#fold"/></svg></div>
    <div class="panel para">
      <div class="tabs"><h2 class="tab"><svg class="dia"><use href="#diamond"/></svg>Paragraph Styles</h2><svg class="i14 mn"><use href="#burger"/></svg></div>
      <div class="cur"><span>[Basic Paragraph]</span><svg class="i15"><use href="#plusbox"/></svg><svg class="i14"><use href="#bolt"/></svg></div>
      <button class="item"><b>[Basic Paragraph]</b></button>
      <footer class="sfoot"><svg class="i18 cl"><use href="#cloud"/></svg><svg class="i16"><use href="#folder"/></svg><svg class="i16 dim" viewBox="0 0 16 16"><path d="M5 2a3 3 0 0 0 0 6h1v6h1.200V3.300h1V14h1.200V2z" fill="currentColor"/><path d="M11 9l4-4M10.500 6.500h4M12 10V6" stroke="currentColor"/></svg><svg class="i15"><use href="#newpage"/></svg><svg class="i15 dim"><use href="#trash"/></svg></footer>
    </div>
    <div class="panel char">
      <div class="tabs"><h2 class="tab"><svg class="dia"><use href="#diamond"/></svg>Character Styles</h2><svg class="i14 mn"><use href="#burger"/></svg></div>
      <div class="cur"><span>[None]</span><svg class="i15"><use href="#plusbox"/></svg><svg class="i14"><use href="#bolt"/></svg></div>
      <button class="item"><b>[None]</b><svg class="i14" viewBox="0 0 16 16"><path d="M2 14l1-3 6-6 3 3-6 5zM10 4l2.500-2.500L15 4l-2.500 2.500z" fill="currentColor"/><path d="M2 3l12 11" stroke="currentColor" stroke-width="1.300"/></svg></button>
      <footer class="sfoot"><svg class="i18 cl dim"><use href="#cloud"/></svg><svg class="i16"><use href="#folder"/></svg><svg class="i15"><use href="#newpage"/></svg><svg class="i15 dim"><use href="#trash"/></svg></footer>
    </div>
    <div class="rest"></div>
  </section>

  <section class="dock">
    <div class="strip"><svg class="fold"><use href="#unfold"/></svg></div>
    <div class="grp"><i class="grip"></i>
      <button><svg class="i18" viewBox="0 0 18 18"><path d="M9 1l7.500 5L9 11 1.500 6z" fill="currentColor"/><path d="M2 10.500l7 4.700 7-4.700" fill="none" stroke="currentColor" stroke-width="2.300"/></svg></button>
      <button><svg class="i18" viewBox="0 0 18 18"><g fill="none" stroke="currentColor" stroke-width="2"><rect x="1" y="5.500" width="9" height="7" rx="3.500"/><rect x="8" y="5.500" width="9" height="7" rx="3.500"/></g></svg></button></div>
    <div class="grp"><i class="grip"></i>
      <button><svg class="i18" viewBox="0 0 18 18"><path d="M1 3.500h16" stroke="currentColor" stroke-width="1.500"/><path d="M1 8.500h16" stroke="currentColor" stroke-width="2.300"/><path d="M1 14h16" stroke="currentColor" stroke-width="3.500"/></svg></button>
      <button><svg class="i18" viewBox="0 0 18 18"><path d="M1 4h16v11H1z" fill="currentColor"/><path d="M2.500 5.500h3v3h-3zM12.500 5.500h3v3h-3zM2.500 10.500h3v3h-3zM7.500 10.500h3v3h-3z" fill="#666"/></svg></button>
      <button><svg class="i18" viewBox="0 0 18 18"><path d="M1.500 4h15v11h-15z" fill="url(#fade)" stroke="currentColor"/></svg></button></div>
    <div class="grp"><i class="grip"></i>
      <button class="fx">fx</button>
      <button><svg class="i18" viewBox="0 0 18 18"><path d="M5 8V3h11v11H9" fill="none" stroke="currentColor" stroke-width="1.300"/><path d="M4 2h2v2H4zM15 2h2v2h-2zM15 13h2v2h-2z" fill="currentColor"/><path d="M1.500 8.500h5v5h-5zM4.500 11.500h4v4h-4z" fill="none" stroke="currentColor" stroke-width="1.300"/></svg></button></div>
    <div class="grp"><i class="grip"></i>
      <button><svg class="i18" viewBox="0 0 18 18"><path d="M8.500 1c3-.5 5 .5 5.500 2.500l-2 2 2 3c1 4-1.500 8-5 8.500H5v-2l4-1.500L5 9C3.500 6 4 2 8.500 1zM3 11l3.500.5L6 14H3z" fill="currentColor"/></svg></button></div>
  </section>
</main>
</div>
<script src="rulers.js"></script>
</body>
</html>
```
FILE: styles.css
```css
* { box-sizing: border-box; }
html, body { height: 100%; }
body { margin: 0; display: flex; flex-direction: column; background: #181c26; color: #e6e6e6; font: 10px/14px Lato, "Liberation Sans", sans-serif; overflow: hidden; }
h1, h2, h3, p { margin: 0; font-weight: 400; font-size: inherit; }
button { margin: 0; padding: 0; border: 0; background: none; color: inherit; font: inherit; display: flex; align-items: center; justify-content: center; }
input, select { font: inherit; color: inherit; }
svg { flex: none; display: block; color: #c4c4c4; }
i { display: block; }
.defs { position: absolute; width: 0; height: 0; }
.i12 { width: 12px; height: 12px; } .i14 { width: 14px; height: 14px; } .i15 { width: 15px; height: 15px; }
.i16 { width: 16px; height: 16px; } .i18 { width: 18px; height: 16px; } .i20 { width: 20px; height: 16px; }
.dim { color: #858585; }
.on { background: #2e2e2e; border-radius: 2px; }

/* system menu bar */
.menubar { height: 21px; flex: none; display: flex; align-items: center; gap: 15px; padding: 0 21px 0 17px; background: #181c26; font: 13px/20px Inter, "Liberation Sans", sans-serif; color: #fff; }
.menubar a { color: inherit; text-decoration: none; }
.menubar .app { font-weight: 600; }
.tray { margin-left: auto; display: flex; align-items: center; gap: 10px; }
.bat { width: 22px; height: 14px; }
.power { display: flex; align-items: center; gap: 3px; }
.pct { font-size: 11px; }
.clock { margin: 0 8px; }
.siri { margin-left: 5px; }

.window { flex: 1; min-height: 0; display: flex; flex-direction: column; margin-right: 1px; background: #424242; border-radius: 4px 4px 0 0; overflow: hidden; }

/* application bar */
.appbar { height: 31px; flex: none; display: grid; grid-template-columns: 1fr auto 1fr; align-items: center; padding: 0 14px 0 8px; background: #535353; border-bottom: 1px solid #424242; }
.appbar h1 { font-size: 12px; padding-left: 26px; }
.left, .right { display: flex; align-items: center; }
.lights { display: flex; gap: 7px; margin-right: 18px; }
.lights i { width: 11px; height: 11px; border-radius: 50%; }
.red { background: #fc5f57; } .amber { background: #fdbc2e; } .green { background: #28c840; }
.badge { width: 15px; height: 14px; margin-right: 17px; background: #c4c4c4; color: #484848; font-weight: 700; }
.zoomlevel { display: flex; align-items: center; justify-content: space-between; width: 72px; padding-right: 8px; border-right: 1px solid #4b4b4b; font-size: 12px; height: 28px; margin-left: -2px; }
.view { gap: 2px; margin-left: 9px; }
.view + .plain { margin-left: 10px; }
.right { justify-content: flex-end; }
.publish { width: 111px; height: 24px; border: 2px solid #e6e6e6; border-radius: 12px; gap: 4px; font-size: 12px; font-weight: 700; }
.workspace { gap: 6px; font-size: 12px; font-weight: 700; height: 20px; margin-left: 4px; padding: 0 11px; border: solid #4b4b4b; border-width: 0 1px; }
.stock { display: flex; align-items: center; gap: 4px; width: 117px; height: 19px; margin-left: 5px; padding-left: 3px; background: #454545; border: 1px solid #666; border-radius: 2px; }
.stock input { width: 90px; border: 0; padding: 0; background: none; }
.stock input::placeholder { color: #858585; }

/* fields */
.field { display: flex; height: 19px; min-width: 0; flex: 1; background: #454545; border: 1px solid #666; border-radius: 2px; }
.field input { flex: 1; min-width: 0; width: 0; padding: 0 4px; border: 0; background: none; outline: 0; }
.field .lead { align-self: center; margin-left: 2px; }
.drop, .spin, .sel { background-repeat: no-repeat; background-position: center; }
.drop { width: 16px; flex: none; border-left: 1px solid #666; background-image: url("data:image/svg+xml,%3Csvg xmlns='http://www.w3.org/2000/svg' width='10' height='8'%3E%3Cpath d='M1.500 2L5 5.500 8.500 2' fill='none' stroke='%23e6e6e6' stroke-width='1.500'/%3E%3C/svg%3E"); }
.spin { width: 15px; flex: none; border-right: 1px solid #666; background-image: url("data:image/svg+xml,%3Csvg xmlns='http://www.w3.org/2000/svg' width='10' height='16'%3E%3Cpath d='M1.500 5.500L5 2.500l3.500 3M1.500 10.500l3.500 3 3.500-3' fill='none' stroke='%23e6e6e6' stroke-width='1.400'/%3E%3C/svg%3E"); }
.spin.off { background-color: #5e5e5e; opacity: .6; }
.sel { appearance: none; height: 19px; width: 100%; min-width: 0; padding: 0 3px; border: 1px solid #666; border-radius: 2px; background-color: #454545; background-position: right 3px center; background-image: url("data:image/svg+xml,%3Csvg xmlns='http://www.w3.org/2000/svg' width='10' height='8'%3E%3Cpath d='M1.500 2L5 5.500 8.500 2' fill='none' stroke='%23e6e6e6' stroke-width='1.500'/%3E%3C/svg%3E"); }

/* control bar */
.control { height: 54px; flex: none; display: flex; align-items: center; padding: 0 5px 0 18px; background: #535353; border-bottom: 1px solid #3c3c3c; }
.control > * { flex: none; }
.s { margin-left: 5px; } .m { margin-left: 10px; } .l { margin-left: 16px; }
.pair { display: grid; grid-template-rows: 19px 19px; row-gap: 4px; }
.pair label { display: flex; align-items: center; gap: 4px; }
.modes { width: 20px; }
.tgl { color: #d0d0d0; font-size: 12px; }
.tgl.big { font-size: 14px; }
.fonts { width: 144px; }
.num { width: 97px; }
.keys { display: grid; grid-auto-rows: 19px; row-gap: 4px; justify-items: center; }
.keys button { width: 20px; }
.k3 { grid-template-columns: repeat(3, 24px); }
.k4 { grid-template-columns: repeat(4, 24px); }
.charstyle { display: grid; grid-template: 19px 19px / 24px 144px; row-gap: 4px; align-items: center; }
.charstyle .sel { grid-column: 2; }
.adot { font-size: 16px; font-weight: 700; color: #c4c4c4; }
.lit input { background: #e2e2e2; color: #111; padding-left: 6px; }
.charstyle + .l { margin-left: 18px; }
.lists { width: 15px; }
.flash { margin-left: auto; margin-right: 5px; }
.gear { padding-left: 6px; border-left: 1px solid #4b4b4b; }

/* workspace */
.work { flex: 1; min-height: 0; display: grid; grid-template-columns: 108px 35px minmax(0, 1fr) 227px 217px 34px; column-gap: 2px; border-bottom: 2px solid #3c3c3c; }
.work > section { display: flex; flex-direction: column; min-height: 0; background: #535353; }
.strip { height: 11px; flex: none; display: flex; align-items: center; justify-content: flex-end; padding: 0 6px; background: #424242; }
.fold { width: 10px; height: 8px; }
.tabs { height: 24px; flex: none; display: flex; align-items: center; justify-content: space-between; background: #424242; }
.tab { display: flex; align-items: center; gap: 3px; height: 24px; padding: 2px 10px 0 5px; background: #535353; font-size: 11px; font-weight: 700; color: #f0f0f0; }
.tab.wide { padding-left: 11px; }
.dia { width: 8px; height: 12px; }
.mn { margin-right: 3px; }
.grip { width: 18px; height: 4px; margin: 3px auto 2px; background: repeating-linear-gradient(90deg, #3c3c3c 0 1px, #535353 1px 2px); }

.pages .strip { justify-content: flex-start; padding: 0 4px; }
.masters { height: 112px; flex: none; padding: 3px 19px 0 3px; border-bottom: 2px solid #5e5e5e; }
.master { display: flex; justify-content: space-between; align-items: center; height: 20px; margin-bottom: 4px; color: #fff; line-height: 12px; }
.leaf { width: 15px; height: 19px; background: #fff; }
.spread { display: flex; gap: 1px; }
.cl { border-top-left-radius: 3px; } .cr { border-top-right-radius: 3px; }
.thumbs { flex: 1; padding: 4px 0 0 17px; }
.sheet { width: 26px; height: 42px; border-left: 1px solid #ccc; }
.tri { display: block; width: 0; margin-left: 8px; border: 4px solid transparent; border-top: 5px solid #c4c4c4; border-bottom: 0; }
.blue { display: flex; justify-content: flex-end; align-items: flex-start; height: 32px; background: #8cc6fb; }
.blue b { padding: 0 1px; background: #fff; color: #111; line-height: 10px; }
.pnum { display: block; width: 11px; height: 13px; margin-left: 7px; background: #0d83e8; color: #fff; text-align: center; line-height: 13px; }
.pfoot { display: flex; align-items: center; height: 20px; padding: 0 20px 0 5px; }
.pfoot span { margin-right: 3px; }
.pfoot .i15 { margin-left: 10px; }

.tools { align-items: center; }
.tools .strip { width: 100%; justify-content: flex-start; padding: 0 4px; }
.toolset { display: grid; grid-auto-rows: 20px; row-gap: 2px; margin-top: 4px; }
.toolset button { width: 26px; position: relative; }
.more::after { content: ""; position: absolute; right: 1px; bottom: 1px; border: 2px solid #ddd; border-top-color: transparent; border-left-color: transparent; }
.swap { display: flex; gap: 4px; margin-top: 6px; }
.fillstroke { width: 28px; height: 28px; margin: 3px 0 6px; }
.swap.fmt { margin: 0; }
.low { row-gap: 7px; margin-top: 4px; }

/* document window */
.work > .doc { display: grid; grid-template: 25px 15px minmax(0, 1fr) 15px / 14px minmax(0, 1fr) 15px; background: #424242; margin-top: 1px; }
.doctabs { grid-column: 1 / -1; display: flex; }
.doctab { display: flex; align-items: center; gap: 8px; padding: 0 12px 2px 12px; background: #535353; color: #f0f0f0; }
.x { font-size: 14px; }
.origin, .hruler, .vruler { background: #1e1e1e; width: 100%; height: 100%; }
.hruler { border-bottom: 1px solid #777; }
.vruler { border-right: 1px solid #777; }
.hruler text, .vruler text { fill: #eee; font: 700 10px "Open Sans", sans-serif; }
.canvas { grid-area: 3 / 2; background: #5d5d5d; padding: 6px 0 5px; display: flex; justify-content: center; overflow: hidden; }
.page { width: 66%; max-width: 700px; height: 100%; padding: 41px; background: #fff; box-shadow: 2px 2px 0 #0a0a0a; }
.margins { height: 100%; border: 1px solid #dd92ea; }
.vbar { grid-area: 2 / 3 / 4 / 4; display: flex; flex-direction: column; align-items: center; background: #4a4a4a; padding: 0 0 2px; }
.vbar i { width: 11px; flex: 733; margin: 88px 0 84px; background: #696969; border-radius: 6px; }
.up { transform: rotate(180deg); }
.status { grid-column: 1 / -1; display: flex; align-items: center; background: #535353; }
.status .field { flex: none; width: 80px; height: 15px; line-height: 12px; }
.nav { display: flex; gap: 6px; padding: 0 8px 0 9px; }
.nav svg { color: #858585; }
.open { margin-left: 5px; margin-right: 12px; }
.pick { justify-content: flex-start; }
.basic svg, .errs svg { margin-left: auto; }
.basic { width: 103px; margin-right: 11px; }
.errs { width: 80px; margin-right: 6px; }
.errs i { width: 10px; height: 10px; margin-right: 4px; border-radius: 50%; background: #3fae49; }
.hbar { flex: 1; display: grid; grid-template-columns: 12px 269fr 238fr 116fr 12px; align-items: center; height: 15px; background: #484848; }
.hbar i { grid-column: 3; height: 13px; background: #696969; border-radius: 6px; }
.hbar .lt { transform: rotate(90deg); } .hbar .rt { grid-column: 5; transform: rotate(-90deg); }
.split { margin: 0 16px 0 6px; }

/* properties */
.line { padding: 8px 9px 7px; border-bottom: 1px solid #4b4b4b; }
.line, .block { flex: none; }
.block { padding: 0 20px 0 8px; border-bottom: 1px solid #4b4b4b; }
.docblock { padding-top: 9px; padding-bottom: 5px; }
.two { display: grid; grid-template-columns: 85px 83px; justify-content: space-between; align-items: center; height: 19px; margin-bottom: 5px; }
.two.size { margin: 8px 0 9px; }
.orient { display: flex; gap: 3px; }
.orient button { width: 20px; height: 19px; }
.dim1, .cnt, .check { display: flex; align-items: center; }
.dim1 > span:first-child { width: 18px; padding-left: 5px; }
.cnt { gap: 4px; margin-left: -2px; }
.check { gap: 6px; }
.check input { appearance: none; width: 11px; height: 11px; margin: 0; border-radius: 2px; background: #c8c8c8 url("data:image/svg+xml,%3Csvg xmlns='http://www.w3.org/2000/svg' width='11' height='11'%3E%3Cpath d='M2.500 5.500l2.200 2.500 4-5' fill='none' stroke='%23333' stroke-width='1.600'/%3E%3C/svg%3E"); }
.marg { display: grid; grid-template-columns: 85px 20px 85px; justify-content: space-between; align-items: center; margin-top: 7px; }
.docblock .marg .pair { row-gap: 5px; }
.marg label { gap: 3px; }
.link { height: 19px; }
.wide-btn { width: 100%; height: 19px; border: 1px solid #6c6c6c; border-radius: 2px; }
.docblock .wide-btn { margin-top: 13px; }
.docblock .two + h3 { margin-top: 7px; }
.pageblock { padding-top: 8px; padding-bottom: 6px; }
.pageblock .two { margin: 6px 0 7px; }
.acts { display: flex; gap: 9px; justify-content: flex-end; padding-right: 6px; }
.rowblock { display: flex; justify-content: space-between; align-items: center; height: 36px; padding-top: 2px; }
.trio { display: flex; gap: 14px; }
.trio button { width: 20px; height: 20px; }
.quick { padding-top: 8px; border: 0; }
.quick .wide-btn { margin-top: 11px; }

/* style panels */
.panel { display: flex; flex-direction: column; border-bottom: 2px solid #424242; }
.para { flex: 565 1 0; } .char { flex: 386 1 0; } .rest { height: 9px; }
.cur { display: flex; align-items: center; height: 23px; padding: 1px 6px 0 5px; gap: 12px; }
.cur span { margin-right: auto; }
.item { justify-content: space-between; height: 20px; margin: 0 1px; padding: 0 8px 0 30px; background: #4f6a85; color: #fff; }
.sfoot { margin-top: auto; display: flex; align-items: center; gap: 9px; height: 22px; padding: 0 20px 0 3px; border-top: 1px solid #5c5c5c; }
.sfoot .cl { margin-right: auto; }

/* dock */
.dock .strip { padding: 0 4px; }
.grp { display: flex; flex-direction: column; align-items: center; border-bottom: 2px solid #424242; padding-bottom: 1px; }
.grp button { width: 26px; height: 25px; }
.grp .i18 { width: 16px; height: 16px; }
.fx { font-size: 17px; font-style: italic; color: #c4c4c4; }
```
FILE: rulers.js
```js
// Draws both rulers: a label every six picas, a tick every pica.
(function () {
  var NS = 'http://www.w3.org/2000/svg';
  var page = document.querySelector('.page').getBoundingClientRect();
  var pica = page.width / 51;

  function line(svg, x1, y1, x2, y2, color) {
    var el = document.createElementNS(NS, 'path');
    el.setAttribute('d', 'M' + x1 + ' ' + y1 + 'L' + x2 + ' ' + y2);
    el.setAttribute('stroke', color);
    svg.appendChild(el);
  }
  function text(svg, x, y, value) {
    var el = document.createElementNS(NS, 'text');
    el.setAttribute('x', x);
    el.setAttribute('y', y);
    el.textContent = value;
    svg.appendChild(el);
  }
  function draw(id, vertical) {
    var svg = document.getElementById(id);
    var box = svg.getBoundingClientRect();
    var start = vertical ? page.top - box.top : page.left - box.left;
    var size = vertical ? box.height : box.width;
    for (var p = Math.ceil(-start / pica); start + p * pica < size; p++) {
      var at = Math.round(start + p * pica) + 0.5;
      var major = p % 6 === 0;
      var len = major ? 14 : p % 3 === 0 ? 6 : 4;
      var color = major ? '#6a6a6a' : '#777';
      if (vertical) line(svg, 14 - len, at, 14, at, color);
      else line(svg, at, 14 - len, at, 14, color);
      if (!major) continue;
      var label = String(Math.abs(p));
      if (!vertical) text(svg, at + 1, 10, label);
      else label.split('').forEach(function (d, i) { text(svg, 2, at + 9 + i * 9, d); });
    }
  }
  draw('hruler', false);
  draw('vruler', true);
})();
```
